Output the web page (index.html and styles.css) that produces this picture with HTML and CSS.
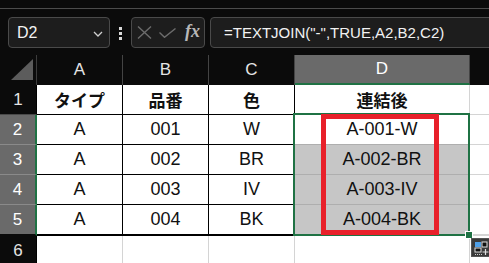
FILE: index.html
```html
<!DOCTYPE html>
<html>
<head>
	<meta charset="utf-8">
	<title>TEXTJOIN</title>
	<link rel="stylesheet" href="styles.css">
</head>
<body>

	<div class="app">
		<div class="topstrip"></div>

		<div class="fbar">
			<div class="namebox">
				<span class="ref">D2</span>
				<svg class="chev" width="10" height="6" viewBox="0 0 10 6"><path d="M1 1 L5 5 L9 1" fill="none" stroke="#d0d0d0" stroke-width="1.3"/></svg>
			</div>
			<div class="vdots"><i></i><i></i><i></i></div>
			<div class="fxbox">
				<svg width="15" height="13" viewBox="0 0 15 13"><path d="M1 0.5 L14 12.5 M14 0.5 L1 12.5" stroke="#6c6c6c" stroke-width="1.4" fill="none"/></svg>
				<svg width="17" height="10" viewBox="0 0 17 10"><path d="M0.5 4.5 L5.5 9.3 L16.5 0.5" stroke="#6c6c6c" stroke-width="1.4" fill="none"/></svg>
				<span class="fx">fx</span>
			</div>
			<div class="formula">=TEXTJOIN("-",TRUE,A2,B2,C2)</div>
		</div>

		<div class="sheet">
			<div class="grid">
				<div class="corner"></div>
				<div class="colhead">A</div>
				<div class="colhead">B</div>
				<div class="colhead">C</div>
				<div class="colhead sel">D</div>
				<div class="colhead"></div>

				<div class="rowhead">1</div>
				<div class="cell tb jp">タイプ</div>
				<div class="cell tb jp">品番</div>
				<div class="cell tb jp">色</div>
				<div class="cell jp">連結後</div>
				<div class="cell"></div>

				<div class="rowhead sel">2</div>
				<div class="cell tb">A</div>
				<div class="cell tb">001</div>
				<div class="cell tb">W</div>
				<div class="cell active">A-001-W</div>
				<div class="cell"></div>

				<div class="rowhead sel">3</div>
				<div class="cell tb">A</div>
				<div class="cell tb">002</div>
				<div class="cell tb">BR</div>
				<div class="cell shade">A-002-BR</div>
				<div class="cell"></div>

				<div class="rowhead sel">4</div>
				<div class="cell tb">A</div>
				<div class="cell tb">003</div>
				<div class="cell tb">IV</div>
				<div class="cell shade">A-003-IV</div>
				<div class="cell"></div>

				<div class="rowhead sel last">5</div>
				<div class="cell tb last">A</div>
				<div class="cell tb last">004</div>
				<div class="cell tb last">BK</div>
				<div class="cell shade last">A-004-BK</div>
				<div class="cell last"></div>

				<div class="rowhead">6</div>
				<div class="cell"></div>
				<div class="cell"></div>
				<div class="cell"></div>
				<div class="cell"></div>
				<div class="cell"></div>
			</div>

			<div class="selection"></div>
			<div class="handle"></div>
			<div class="redbox"></div>
			<div class="quick">
				<svg width="18" height="18" viewBox="0 0 18 18">
					<rect x="3" y="3" width="6" height="5" fill="#4ea0e8"/>
					<rect x="10" y="3" width="5" height="5" fill="#111" stroke="#e0e0e0" stroke-width="1"/>
					<rect x="3" y="9" width="6" height="4" fill="#111" stroke="#e0e0e0" stroke-width="1"/>
					<path d="M3 15.5 h1 M5 15.5 h1 M7 15.5 h1 M9 15.5 h1" stroke="#cfcfcf" stroke-width="1"/>
					<path d="M13.5 10 v6 M10.5 13 h6" stroke="#e0e0e0" stroke-width="1.2"/>
				</svg>
			</div>
		</div>
	</div>

</body>
</html>
```

FILE: styles.css
```css
* {
	padding: 0;
	margin: 0;
	box-sizing: border-box;
}
body {
	background: #0b0b0b;
	overflow: hidden;
	font-family: "Liberation Sans", "Noto Sans CJK JP", sans-serif;
}
.app {
	width: 489px;
	height: 263px;
	background: #0b0b0b;
	overflow: hidden;
}
.topstrip {
	height: 9px;
	border-bottom: 1px solid #4c4c4c;
}

/* formula bar */
.fbar {
	display: flex;
	align-items: center;
	height: 31px;
	margin-top: 8px;
	padding-left: 8px;
}
.namebox,
.fxbox,
.formula {
	height: 31px;
	border: 1px solid #4a4a4a;
	border-radius: 4px;
	background: #1d1d1d;
	display: flex;
	align-items: center;
}
.namebox {
	width: 102px;
	padding: 0 6px 0 8px;
	justify-content: space-between;
}
.ref {
	color: #f2f2f2;
	font-size: 16px;
}
.chev {
	margin-top: 2px;
}
.vdots {
	width: 21px;
	display: flex;
	flex-direction: column;
	align-items: center;
	gap: 2px;
	padding-top: 2px;
}
.vdots i {
	display: block;
	width: 3px;
	height: 3px;
	background: #d8d8d8;
}
.fxbox {
	width: 74px;
	padding-left: 5px;
	gap: 7px;
}
.fx {
	font-family: "Liberation Serif", serif;
	font-style: italic;
	font-weight: bold;
	color: #b8b8b8;
	font-size: 18px;
	margin-left: 2px;
	margin-top: -2px;
}
.formula {
	flex: 1;
	margin-left: 5px;
	margin-right: -10px;
	padding-left: 13px;
	color: #f2f2f2;
	font-size: 15px;
}

/* sheet */
.sheet {
	position: relative;
	margin-top: 7px;
}
.grid {
	display: grid;
	grid-template-columns: 37px 86px 86px 86px 175px 30px;
	grid-template-rows: 30px 30px 30px 30px 30px 31px 30px;
}
.corner {
	background: #0b0b0b;
	border-right: 1px solid #3c3c3c;
	position: relative;
}
.corner::after {
	content: "";
	position: absolute;
	left: 11px;
	top: 4px;
	width: 22px;
	height: 21px;
	background: #5c5c5c;
	clip-path: polygon(100% 0, 100% 100%, 0 100%);
}
.colhead {
	background: #0b0b0b;
	color: #e4e4e4;
	font-size: 17px;
	display: flex;
	align-items: center;
	justify-content: center;
	border-right: 1px solid #444;
}
.colhead.sel {
	background: #6a6a6a;
	color: #fff;
	border-bottom: 2px solid #1f7244;
}
.rowhead {
	background: #0b0b0b;
	color: #e4e4e4;
	font-size: 17px;
	display: flex;
	align-items: center;
	justify-content: center;
	border-right: 1px solid #000;
	border-bottom: 1px solid #4a4a4a;
}
.rowhead.sel {
	background: #6a6a6a;
	color: #fff;
	border-right: 2px solid #1f7244;
	border-bottom-color: #8a8a8a;
}
.cell {
	background: #fff;
	color: #111;
	font-size: 18px;
	display: flex;
	align-items: center;
	justify-content: center;
	border-right: 1px solid #d4d4d4;
	border-bottom: 1px solid #d4d4d4;
}
.cell.jp {
	font-family: "Noto Sans CJK JP", sans-serif;
	font-weight: bold;
	font-size: 17px;
}
.cell.tb {
	border-right-color: #000;
	border-bottom-color: #000;
}
.cell.last {
	border-bottom-width: 2px;
}
.cell.tb.last {
	border-bottom-color: #000;
}
.cell.shade {
	background: #c6c6c6;
	border-bottom-color: #aeaeae;
}
.cell.active {
	border-bottom-color: #aeaeae;
}
.rowhead.last {
	border-bottom: 2px solid #0b0b0b;
}

/* overlays */
.selection {
	position: absolute;
	left: 293px;
	top: 58px;
	width: 177px;
	height: 123px;
	border: 2px solid #1f7244;
}
.handle {
	position: absolute;
	left: 466px;
	top: 177px;
	width: 6px;
	height: 6px;
	background: #1f7244;
	outline: 1px solid #fff;
}
.redbox {
	position: absolute;
	left: 321px;
	top: 59px;
	width: 118px;
	height: 121px;
	border: 5px solid #e8202a;
}
.quick {
	position: absolute;
	left: 471px;
	top: 183px;
	width: 20px;
	height: 19px;
	background: #3a3a3a;
	border: 1px solid #555;
}
.quick svg {
	display: block;
}
```
